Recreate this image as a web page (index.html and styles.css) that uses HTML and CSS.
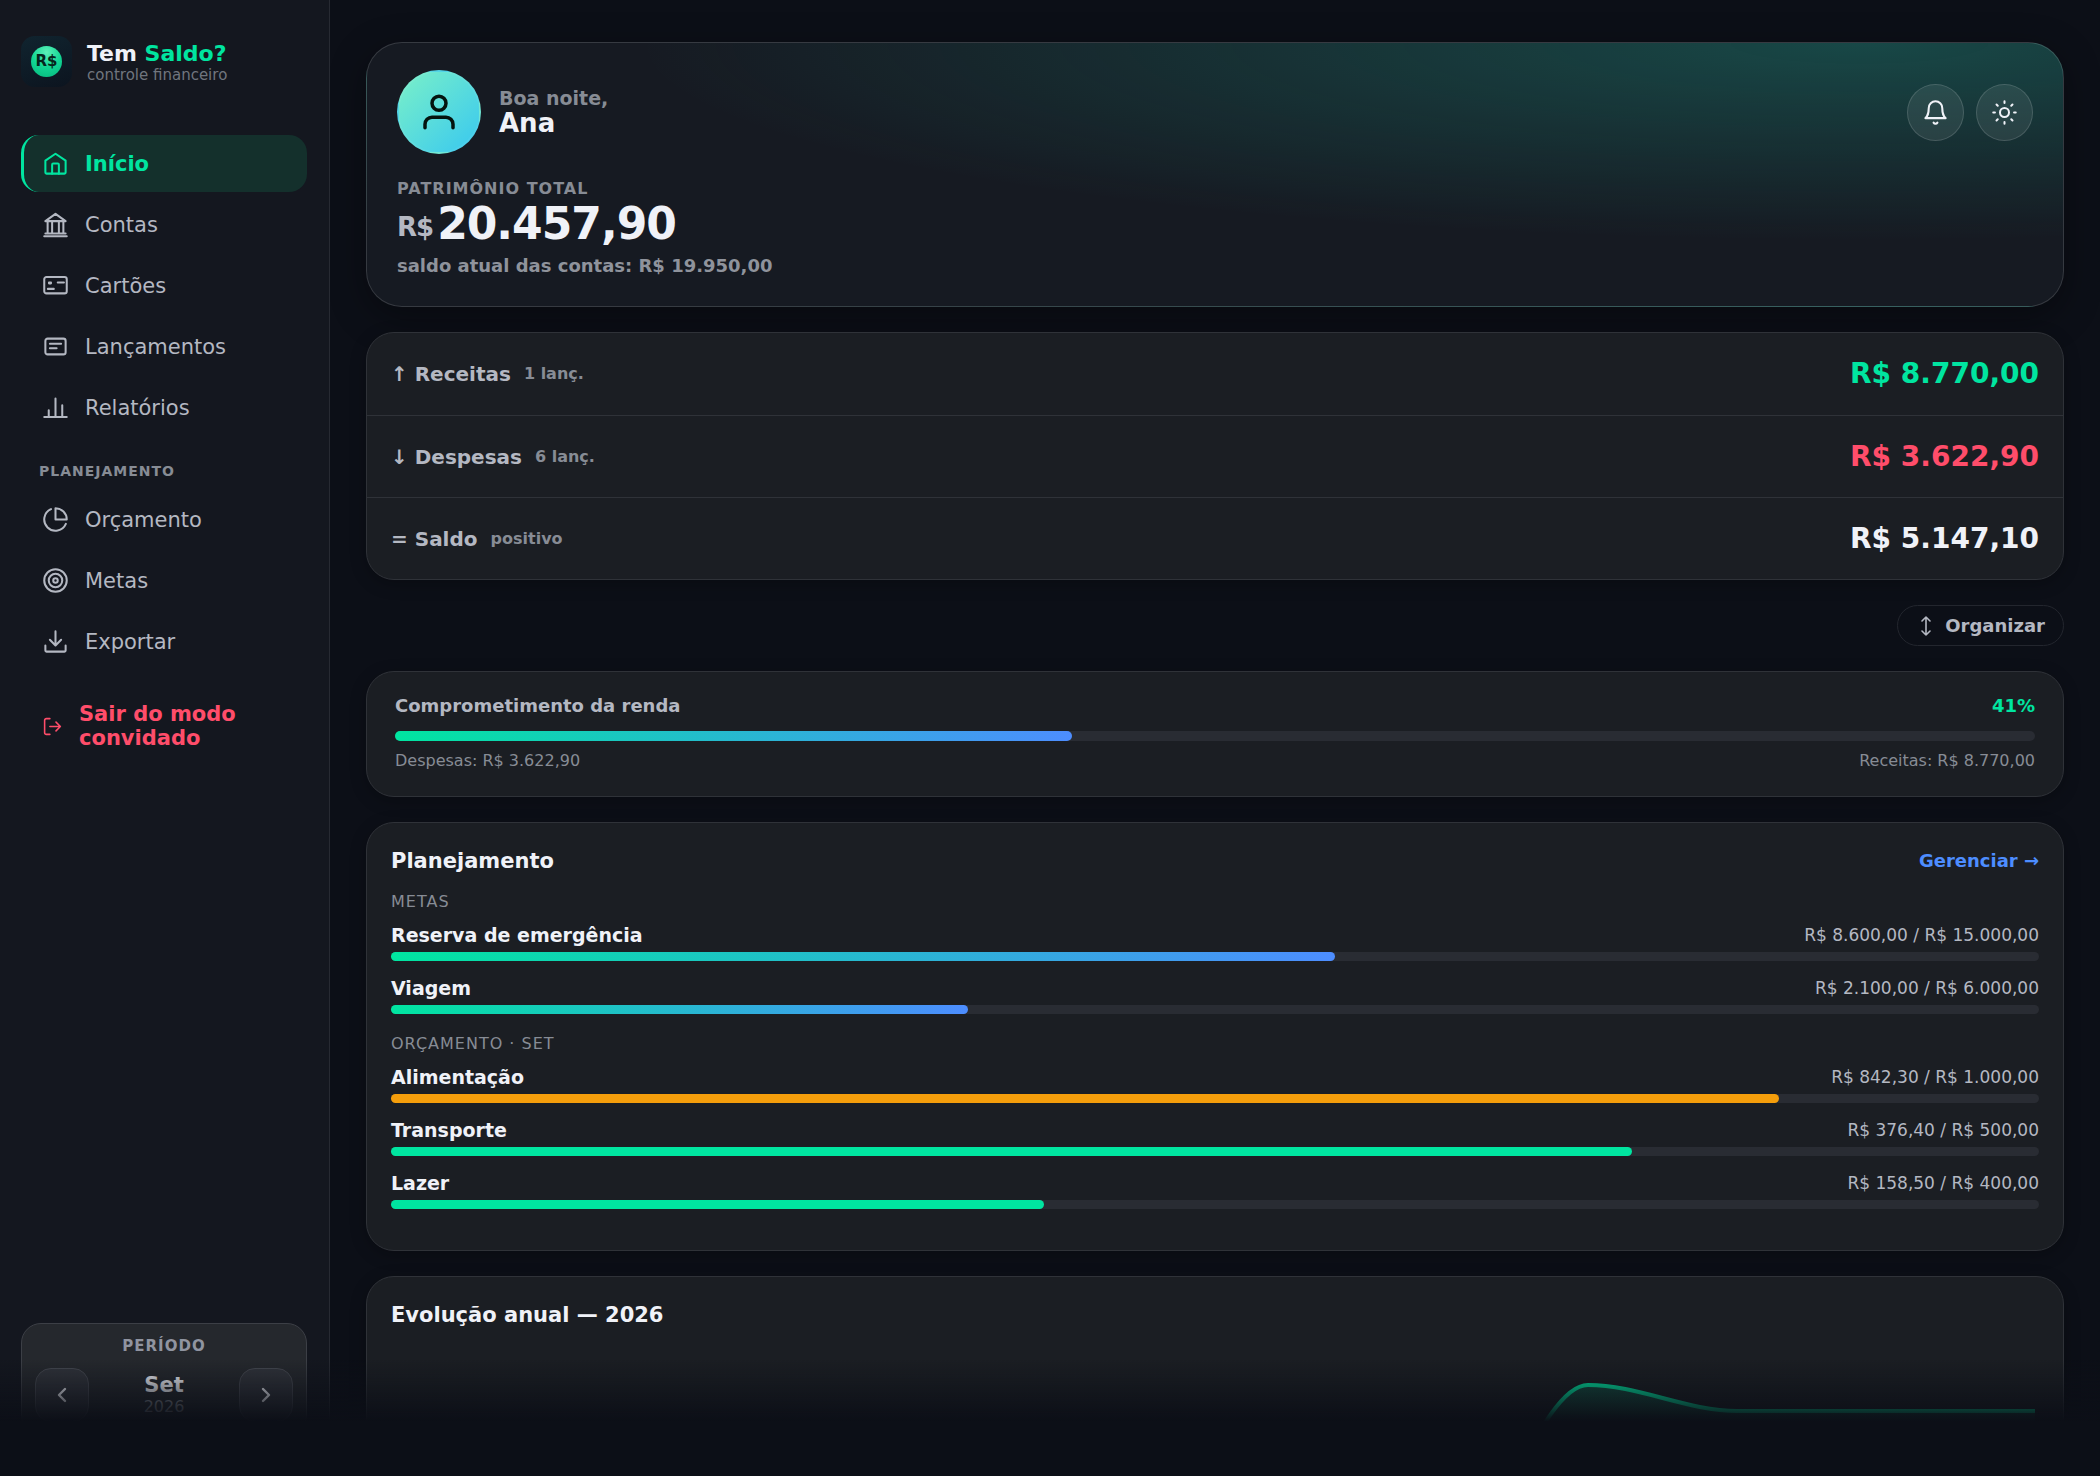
FILE: index.html
```html
<!DOCTYPE html>
<html lang="pt-BR">
<head>
  <meta charset="UTF-8" />
  <meta name="viewport" content="width=device-width, initial-scale=1.0"/>
  <title>Tem Saldo?</title>
  <link rel="stylesheet" href="styles.css">
</head>
<body>
  <div class="app">
    <aside class="sidebar">
      <div class="brand">
        <div class="brand-logo"><span class="coin">R$</span></div>
        <div>
          <div class="brand-name">Tem <span>Saldo?</span></div>
          <div class="brand-sub">controle financeiro</div>
        </div>
      </div>

      <nav class="nav">
        <a class="nav-item active" href="#inicio">
          <svg class="icon" viewBox="0 0 24 24"><path d="M3 9.5 12 3.3l9 6.2V20a1 1 0 0 1-1 1H4a1 1 0 0 1-1-1z"/><path d="M9 21v-8a1 1 0 0 1 1-1h4a1 1 0 0 1 1 1v8"/></svg>
          Início
        </a>
        <a class="nav-item" href="#contas">
          <svg class="icon" viewBox="0 0 24 24"><path d="M3 9l9-6.5L21 9z"/><path d="M5 9v10.5M9 9v10.5M15 9v10.5M19 9v10.5M3 20h18M2 22.4h20"/></svg>
          Contas
        </a>
        <a class="nav-item" href="#cartoes">
          <svg class="icon" viewBox="0 0 24 24"><rect x="2" y="4.5" width="20" height="14.5" rx="2"/><path d="M6.2 9.3h1.8v.8H6.2zM14 9.3h5.5M5.2 15h5.3"/></svg>
          Cartões
        </a>
        <a class="nav-item" href="#lancamentos">
          <svg class="icon" viewBox="0 0 24 24"><rect x="3" y="5" width="18" height="14" rx="2"/><path d="M7 9.5h10M7 13.5h6"/></svg>
          Lançamentos
        </a>
        <a class="nav-item" href="#relatorios">
          <svg class="icon" viewBox="0 0 24 24"><path d="M2 20.5h20M6 20.5v-6M12 20.5V4M18 20.5V10"/></svg>
          Relatórios
        </a>
        <div class="nav-label">PLANEJAMENTO</div>
        <a class="nav-item" href="#orcamento">
          <svg class="icon" viewBox="0 0 24 24"><path d="M21.2 15.9A10 10 0 1 1 8 2.8"/><path d="M22 12A10 10 0 0 0 12 2v10z"/></svg>
          Orçamento
        </a>
        <a class="nav-item" href="#metas">
          <svg class="icon" viewBox="0 0 24 24"><circle cx="12" cy="12" r="10"/><circle cx="12" cy="12" r="6"/><circle cx="12" cy="12" r="2"/></svg>
          Metas
        </a>
        <a class="nav-item" href="#exportar">
          <svg class="icon" viewBox="0 0 24 24"><path d="M3 15.5V20a1 1 0 0 0 1 1h16a1 1 0 0 0 1-1v-4.5M12 3v12M7 10.5l5 5 5-5"/></svg>
          Exportar
        </a>
        <button class="nav-exit" type="button">
          <svg class="icon" viewBox="0 0 24 24"><path d="M9 21H5a2 2 0 0 1-2-2V5a2 2 0 0 1 2-2h4M16 17l5-5-5-5M21 12H9"/></svg>
          <span>Sair do modo convidado</span>
        </button>
      </nav>

      <div class="period">
        <div class="period-label">PERÍODO</div>
        <div class="period-row">
          <button type="button" aria-label="Mês anterior"><svg class="icon" viewBox="0 0 24 24"><path d="M15 6l-6 6 6 6"/></svg></button>
          <div class="period-date">
            <strong>Set</strong>
            <span>2026</span>
          </div>
          <button type="button" aria-label="Próximo mês"><svg class="icon" viewBox="0 0 24 24"><path d="M9 6l6 6-6 6"/></svg></button>
        </div>
      </div>
    </aside>

    <main class="main">
      <section class="hero">
        <div class="hero-top">
          <div class="avatar"><svg class="icon" viewBox="0 0 24 24"><circle cx="12" cy="7" r="4"/><path d="M20 21v-2a4 4 0 0 0-4-4H8a4 4 0 0 0-4 4v2"/></svg></div>
          <div class="greeting">
            <div class="greeting-hi">Boa noite,</div>
            <div class="greeting-name">Ana</div>
          </div>
          <div class="hero-actions">
            <button type="button" aria-label="Notificações"><svg class="icon" viewBox="0 0 24 24"><path d="M18 8A6 6 0 0 0 6 8c0 7-3 9-3 9h18s-3-2-3-9"/><path d="M13.7 21a2 2 0 0 1-3.4 0"/></svg></button>
            <button type="button" aria-label="Tema"><svg class="icon" viewBox="0 0 24 24"><circle cx="12" cy="12" r="4"/><path d="M12 2v1.5M12 20.5V22M2 12h1.5M20.5 12H22M4.9 4.9L6 6M18 18l1.1 1.1M4.9 19.1L6 18M18 6l1.1-1.1"/></svg></button>
          </div>
        </div>
        <div class="hero-label">PATRIMÔNIO TOTAL</div>
        <div class="hero-value"><small>R$</small>20.457,90</div>
        <div class="hero-sub">saldo atual das contas: R$ 19.950,00</div>
      </section>

      <section class="card summary">
        <div class="summary-row">
          <span class="summary-name">↑ Receitas</span>
          <span class="summary-note">1 lanç.</span>
          <span class="summary-value green">R$ 8.770,00</span>
        </div>
        <div class="summary-row">
          <span class="summary-name">↓ Despesas</span>
          <span class="summary-note">6 lanç.</span>
          <span class="summary-value red">R$ 3.622,90</span>
        </div>
        <div class="summary-row">
          <span class="summary-name">= Saldo</span>
          <span class="summary-note">positivo</span>
          <span class="summary-value">R$ 5.147,10</span>
        </div>
      </section>

      <button class="organize" type="button">
        <svg class="icon" viewBox="0 0 20 20"><path d="M10 1v18M6 5l4-4 4 4M6 15l4 4 4-4"/></svg>
        Organizar
      </button>

      <section class="card income">
        <div class="split income-head"><span>Comprometimento da renda</span><span class="green">41%</span></div>
        <div class="track thick"><div class="fill blend" style="width: 41.3%"></div></div>
        <div class="split income-foot"><span>Despesas: R$ 3.622,90</span><span>Receitas: R$ 8.770,00</span></div>
      </section>

      <section class="card panel">
        <div class="split panel-head">
          <h2>Planejamento</h2>
          <a href="#planejamento">Gerenciar →</a>
        </div>
        <div class="group-label">METAS</div>
        <div class="goal">
          <div class="split"><strong>Reserva de emergência</strong><span>R$ 8.600,00 / R$ 15.000,00</span></div>
          <div class="track"><div class="fill blend" style="width: 57.3%"></div></div>
        </div>
        <div class="goal">
          <div class="split"><strong>Viagem</strong><span>R$ 2.100,00 / R$ 6.000,00</span></div>
          <div class="track"><div class="fill blend" style="width: 35%"></div></div>
        </div>
        <div class="group-label">ORÇAMENTO · SET</div>
        <div class="goal">
          <div class="split"><strong>Alimentação</strong><span>R$ 842,30 / R$ 1.000,00</span></div>
          <div class="track"><div class="fill warn" style="width: 84.2%"></div></div>
        </div>
        <div class="goal">
          <div class="split"><strong>Transporte</strong><span>R$ 376,40 / R$ 500,00</span></div>
          <div class="track"><div class="fill" style="width: 75.3%"></div></div>
        </div>
        <div class="goal">
          <div class="split"><strong>Lazer</strong><span>R$ 158,50 / R$ 400,00</span></div>
          <div class="track"><div class="fill" style="width: 39.6%"></div></div>
        </div>
      </section>

      <section class="card panel">
        <h2>Evolução anual — 2026</h2>
        <svg class="chart" viewBox="0 0 1640 260" preserveAspectRatio="none">
          <defs>
            <linearGradient id="area" x1="0" y1="0" x2="0" y2="1">
              <stop offset="0" stop-color="#00e5a0" stop-opacity="0.22"/>
              <stop offset="1" stop-color="#00e5a0" stop-opacity="0"/>
            </linearGradient>
          </defs>
          <path class="chart-area" d="M0 224H1044C1094 224 1143 36 1193 36C1243 36 1292 62 1342 62H1640V260H0z"/>
          <path class="chart-line" d="M0 224H1044C1094 224 1143 36 1193 36C1243 36 1292 62 1342 62H1640"/>
        </svg>
      </section>
    </main>
    <div class="bottom-fade"></div>
  </div>
</body>
</html>
```
FILE: styles.css
```css
:root {
  --bg: #0c0f17;
  --card: #1b1e23;
  --line: #2f3238;
  --text: #f0f2f8;
  --soft: #b4b8c2;
  --muted: #878c95;
  --green: #00e5a0;
  --red: #ff4d6a;
  --blue: #4d8dff;
}

* {
  box-sizing: border-box;
}

body {
  margin: 0;
  font-family: "DejaVu Sans", Verdana, sans-serif;
  font-size: 16px;
  line-height: 20px;
  background: var(--bg);
  color: var(--text);
}

button {
  font: inherit;
  color: inherit;
  cursor: pointer;
}

a {
  text-decoration: none;
}

h2 {
  margin: 0;
  font-size: 21px;
  line-height: 28px;
}

.icon {
  width: 27px;
  height: 27px;
  flex: none;
  display: block;
  fill: none;
  stroke: currentColor;
  stroke-width: 1.8;
  stroke-linecap: round;
  stroke-linejoin: round;
}

.green { color: var(--green); }
.red { color: var(--red); }

.app {
  display: flex;
  height: 100vh;
  overflow: hidden;
}

/* sidebar */
.sidebar {
  display: flex;
  flex-direction: column;
  flex: none;
  width: 330px;
  padding: 36px 22px 41px 21px;
  background: #14171f;
  border-right: 1px solid #272a32;
}

.brand {
  display: flex;
  align-items: center;
  gap: 15px;
  margin-bottom: 48px;
}

.brand-logo {
  display: flex;
  align-items: center;
  justify-content: center;
  width: 51px;
  height: 51px;
  border-radius: 14px;
  background: linear-gradient(160deg, #10242f, #0c141f);
}

.coin {
  width: 31px;
  height: 31px;
  border-radius: 50%;
  background: radial-gradient(circle at 50% 20%, #5cf0b8, #12d694 50%, #06b87d);
  color: #06251c;
  font-size: 15px;
  font-weight: bold;
  line-height: 31px;
  text-align: center;
}

.brand-name {
  font-size: 22px;
  font-weight: bold;
  line-height: 26px;
}

.brand-name span {
  color: var(--green);
}

.brand-sub {
  color: #70757e;
  font-size: 15px;
  line-height: 16px;
}

.nav {
  display: flex;
  flex-direction: column;
  gap: 4px;
}

.nav-item {
  display: flex;
  align-items: center;
  gap: 16px;
  height: 57px;
  padding: 0 18px;
  border-left: 3px solid transparent;
  border-radius: 18px;
  color: var(--soft);
  font-size: 21px;
}

.nav-item.active {
  background: #14302c;
  border-left-color: var(--green);
  color: var(--green);
  font-weight: bold;
}

.nav-label {
  margin: 21px 18px 6px;
  color: var(--muted);
  font-size: 14px;
  font-weight: bold;
  letter-spacing: 1px;
}

.nav-exit {
  display: flex;
  align-items: center;
  gap: 16px;
  margin-top: 16px;
  padding: 12px 21px;
  border: none;
  background: none;
  color: var(--red);
  font-size: 21px;
  font-weight: bold;
  line-height: 24px;
  text-align: left;
}

.nav-exit .icon {
  width: 21px;
  height: 21px;
}

.period {
  margin-top: auto;
  padding: 12px 13px;
  border: 1px solid #3c3f46;
  border-radius: 20px;
  background: #25282d;
}

.period-label {
  margin-bottom: 12px;
  color: #9094a0;
  font-size: 15px;
  font-weight: bold;
  letter-spacing: 1px;
  text-align: center;
}

.period-row {
  display: flex;
  align-items: center;
  justify-content: space-between;
}

.period-row button {
  display: flex;
  align-items: center;
  justify-content: center;
  width: 54px;
  height: 54px;
  padding: 0;
  border: 1px solid #44474f;
  border-radius: 16px;
  background: #30333a;
}

.period-row .icon {
  width: 24px;
  height: 24px;
  stroke-width: 2.4;
}

.period-date {
  display: flex;
  flex-direction: column;
  align-items: center;
}

.period-date strong {
  font-size: 21px;
  line-height: 24px;
}

.period-date span {
  color: var(--muted);
}

/* main column */
.main {
  display: flex;
  flex-direction: column;
  flex: 1;
  gap: 25px;
  padding: 42px 36px;
  overflow-y: auto;
  scrollbar-width: none;
}

.main > * {
  flex: none;
}

.hero {
  padding: 27px 30px 28px;
  border: 1px solid rgba(255, 255, 255, 0.14);
  border-radius: 36px;
  background: radial-gradient(72% 75% at 88% 0, rgba(28, 190, 165, 0.28), transparent), #161a22;
  box-shadow: 0 10px 36px rgba(0, 0, 0, 0.35);
}

.hero-top {
  display: flex;
  align-items: center;
  gap: 18px;
  margin-bottom: 25px;
}

.avatar {
  display: flex;
  align-items: center;
  justify-content: center;
  width: 84px;
  height: 84px;
  border: 2px solid rgba(255, 255, 255, 0.06);
  border-radius: 50%;
  background: linear-gradient(135deg, #7af0c8, #38c8f0);
  color: #04140f;
}

.avatar .icon {
  width: 42px;
  height: 42px;
  stroke-width: 2;
}

.greeting-hi {
  color: var(--muted);
  font-size: 19px;
  font-weight: bold;
  line-height: 22px;
}

.greeting-name {
  font-size: 26px;
  font-weight: bold;
  line-height: 28px;
}

.hero-actions {
  display: flex;
  gap: 12px;
  margin-left: auto;
}

.hero-actions button {
  display: flex;
  align-items: center;
  justify-content: center;
  width: 57px;
  height: 57px;
  padding: 0;
  border: 1px solid rgba(255, 255, 255, 0.14);
  border-radius: 50%;
  background: rgba(255, 255, 255, 0.08);
}

.hero-label {
  color: var(--muted);
  font-weight: bold;
  letter-spacing: 1px;
}

.hero-value {
  display: flex;
  align-items: flex-end;
  gap: 4px;
  margin: 3px 0 8px;
  font-size: 44px;
  font-weight: bold;
  letter-spacing: -1px;
  line-height: 44px;
}

.hero-value small {
  padding-bottom: 6px;
  color: var(--soft);
  font-size: 26px;
  line-height: 26px;
}

.hero-sub {
  color: #8f939c;
  font-size: 18px;
  font-weight: bold;
  line-height: 24px;
}

.card {
  border: 1px solid var(--line);
  border-radius: 28px;
  background: var(--card);
  box-shadow: 0 4px 16px rgba(0, 0, 0, 0.25);
}

.summary-row {
  display: flex;
  align-items: center;
  gap: 13px;
  height: 82px;
  padding: 0 24px;
  font-weight: bold;
}

.summary-row + .summary-row {
  border-top: 1px solid var(--line);
}

.summary-name {
  color: var(--soft);
  font-size: 20px;
}

.summary-note {
  color: var(--muted);
}

.summary-value {
  margin-left: auto;
  font-size: 28px;
}

.organize {
  display: flex;
  align-items: center;
  gap: 9px;
  align-self: flex-end;
  height: 41px;
  padding: 0 18px;
  border: 1px solid #23262e;
  border-radius: 21px;
  background: none;
  color: var(--soft);
  font-size: 18px;
  font-weight: bold;
}

.organize .icon {
  width: 20px;
  height: 20px;
  stroke-width: 1.6;
}

.split {
  display: flex;
  align-items: center;
  justify-content: space-between;
}

.track {
  height: 9px;
  border-radius: 5px;
  background: #292c33;
}

.track.thick {
  height: 10px;
}

.fill {
  height: 100%;
  border-radius: 5px;
  background: var(--green);
}

.fill.blend {
  background: linear-gradient(90deg, var(--green), var(--blue));
}

.fill.warn {
  background: #f59e0b;
}

.income {
  padding: 22px 28px 25px;
}

.income-head {
  margin-bottom: 13px;
  font-size: 18px;
  font-weight: bold;
  line-height: 24px;
}

.income-head span:first-child {
  color: var(--soft);
}

.income-foot {
  margin-top: 10px;
  color: var(--muted);
}

.panel {
  padding: 24px 24px 26px;
}

.panel-head {
  margin-bottom: 11px;
}

.panel-head a {
  color: var(--blue);
  font-size: 18px;
  font-weight: bold;
}

.group-label {
  margin: 20px 0 11px;
  color: var(--muted);
  font-size: 16px;
  letter-spacing: 1px;
}

.panel-head + .group-label {
  margin-top: 17px;
}

.goal {
  margin-bottom: 15px;
}

.goal .split {
  margin-bottom: 5px;
  line-height: 24px;
}

.goal strong {
  font-size: 19px;
}

.goal span {
  color: var(--soft);
  font-size: 17px;
}

.chart {
  display: block;
  width: 100%;
  height: 260px;
  margin-top: 20px;
  padding: 0 4px;
}

.chart-area {
  fill: url(#area);
}

.chart-line {
  fill: none;
  stroke: var(--green);
  stroke-width: 4;
  vector-effect: non-scaling-stroke;
}

/* fades the content out at the bottom of the window */
.bottom-fade {
  position: fixed;
  right: 0;
  bottom: 0;
  left: 0;
  height: 116px;
  background: linear-gradient(rgba(12, 15, 23, 0), #0c0f17 53%);
  pointer-events: none;
}
```
